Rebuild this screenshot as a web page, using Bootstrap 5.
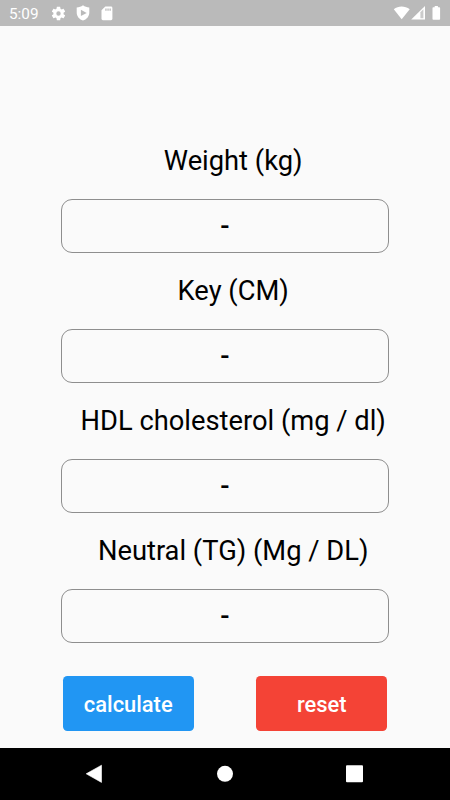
<!DOCTYPE html>
<html lang="en">
<head>
<meta charset="utf-8">
<meta name="viewport" content="width=device-width, initial-scale=1">
<title>Calculator</title>
<link rel="stylesheet" href="https://cdn.jsdelivr.net/npm/bootstrap@5.3.0/dist/css/bootstrap.min.css">
<style>
body{font-family:Roboto,sans-serif;background:#fafafa;color:#000;height:800px}
.status{height:26px;background:#bababa;color:#fff;font-size:15.3px;padding-left:9px;padding-right:8px}
.status svg,.sysnav svg{display:block;fill:#fff}
.clock{width:41px;padding-top:4px}
.ico-shield{margin-left:9px}
.ico-card{margin-left:11px}
.form-area{width:328px;padding-top:109px}
.field-label{height:63.5px;padding-left:16.4px;font-size:27.3px;line-height:53px;white-space:nowrap}
.field-box{height:54.5px;margin-bottom:12.1px;border:1px solid #8e8e8e;border-radius:11px;background:transparent;text-align:center;font-size:27.3px;font-weight:500;padding:0;color:#000}
.actions{padding:21px 1.6px 0}
.act{width:131.3px;height:54.6px;border:0;border-radius:4.4px;color:#fff;font-size:21.9px;font-weight:500;padding:4px 0 0}
.act-calc{background:#2196f3}
.act-reset{background:#f44336}
.sysnav{height:52px;background:#000}
</style>
</head>
<body class="d-flex flex-column overflow-hidden">
<header class="status d-flex align-items-center flex-shrink-0">
  <span class="clock lh-1">5:09</span>
  <svg width="17" height="17" viewBox="0 0 24 24"><path d="M19.14 12.94c.04-.3.06-.61.06-.94 0-.32-.02-.64-.07-.94l2.03-1.58c.18-.14.23-.41.12-.61l-1.92-3.32c-.12-.22-.37-.29-.59-.22l-2.39.96c-.5-.38-1.03-.7-1.62-.94l-.36-2.54c-.04-.24-.24-.41-.48-.41h-3.84c-.24 0-.43.17-.47.41l-.36 2.54c-.59.24-1.13.57-1.62.94l-2.39-.96c-.22-.08-.47 0-.59.22L2.74 8.87c-.12.21-.08.47.12.61l2.03 1.58c-.05.3-.09.63-.09.94s.02.64.07.94l-2.03 1.58c-.18.14-.23.41-.12.61l1.92 3.32c.12.22.37.29.59.22l2.39-.96c.5.38 1.03.7 1.62.94l.36 2.54c.05.24.24.41.48.41h3.84c.24 0 .44-.17.47-.41l.36-2.54c.59-.24 1.13-.56 1.62-.94l2.39.96c.22.08.47 0 .59-.22l1.92-3.32c.12-.22.07-.47-.12-.61l-2.01-1.58zM12 15.1a3.1 3.1 0 1 1 0-6.2 3.1 3.1 0 0 1 0 6.2z"/></svg>
  <svg class="ico-shield" width="14" height="16" viewBox="0 0 14 16"><path fill-rule="evenodd" d="M7 .2C5.200 1.500 3 2.300.7 2.500V7.500C.7 11.500 3.500 14.500 7 15.600c3.500-1.100 6.300-4.100 6.300-8.100v-5C11 2.300 8.800 1.500 7 .2zM4.900 4.700v6.400L10.700 7.900z"/></svg>
  <svg class="ico-card" width="12" height="15" viewBox="0 0 12 15"><path d="M4.300.5h5.700a1.400 1.400 0 0 1 1.400 1.400v10.900a1.400 1.400 0 0 1-1.400 1.400H1.900A1.400 1.400 0 0 1 .5 12.800V4.300z"/><path fill="#bababa" d="M4.300 2.500h1.300v2.200H4.300zM6.400 2.500h1.300v2.200H6.400zM8.500 2.500h1.300v2.200H8.500z"/></svg>
  <svg class="ms-auto" width="49" height="16" viewBox="0 0 49 16"><path d="M.8 4.200C5.200.7 12 .7 16.700 4.200L8.700 14.200z"/><path d="M32 1v13.500H18.200z"/><path fill="#bababa" d="M27.400 7.200l3-3v9h-3z" opacity=".75"/><path d="M41.700 1h3.200v1.200h1.400a.8.800 0 0 1 .8.800v10.900a.8.800 0 0 1-.8.800h-6a.8.800 0 0 1-.8-.8V3a.8.800 0 0 1 .8-.8h1.400z"/></svg>
</header>
<main class="form-area mx-auto flex-grow-1 d-flex flex-column">
  <label class="field-label text-center" for="weight">Weight (kg)</label>
  <input class="field-box w-100" id="weight" value="-">
  <label class="field-label text-center" for="key">Key (CM)</label>
  <input class="field-box w-100" id="key" value="-">
  <label class="field-label text-center" for="hdl">HDL cholesterol (mg / dl)</label>
  <input class="field-box w-100" id="hdl" value="-">
  <label class="field-label text-center" for="tg">Neutral (TG) (Mg / DL)</label>
  <input class="field-box w-100" id="tg" value="-">
  <div class="actions d-flex justify-content-between">
    <button class="btn act act-calc" type="button">calculate</button>
    <button class="btn act act-reset" type="button">reset</button>
  </div>
</main>
<footer class="sysnav flex-shrink-0">
  <svg width="450" height="52" viewBox="0 0 450 52"><path d="M101.500 17.200v17.200L86.200 25.800z" stroke="#fff" stroke-width=".6" stroke-linejoin="round"/><circle cx="225" cy="25.800" r="8"/><rect x="346" y="17.200" width="17" height="17" rx="1"/></svg>
</footer>
<script src="https://cdn.jsdelivr.net/npm/bootstrap@5.3.0/dist/js/bootstrap.bundle.min.js"></script>
</body>
</html>
